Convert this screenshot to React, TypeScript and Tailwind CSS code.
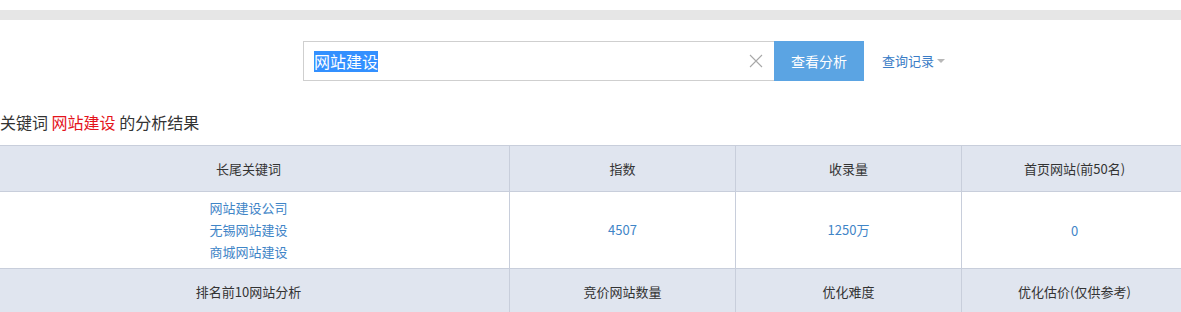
import React from 'react';

const font = { fontFamily: '"Microsoft YaHei", "Noto Sans CJK SC", "Liberation Sans", sans-serif' };

const keywords = ['网站建设公司', '无锡网站建设', '商城网站建设'];

export default function App() {
  return (
    <div className="w-[1181px] h-[312px] overflow-hidden bg-white text-[#333]" style={font}>
      <div className="h-[10px]" />
      <div className="h-[10px] bg-[#e6e6e6]" />

      {/* search bar */}
      <div className="flex items-center pt-[21px] pl-[303px]">
        <div className="flex items-center w-[471px] h-[40px] border border-[#cfcfcf] border-r-0 pl-[10px] pr-[11px]">
          <span className="text-[16px] leading-[21px] bg-[#3390ff] text-white">网站建设</span>
          <div className="flex-1" />
          <svg width="14" height="14" viewBox="0 0 14 14" className="text-[#a8a8a8]">
            <path d="M1 1L13 13M13 1L1 13" stroke="currentColor" strokeWidth="1.1" />
          </svg>
        </div>
        <button className="w-[90px] h-[40px] bg-[#5ba4e3] text-white text-[14px]">查看分析</button>
        <div className="flex items-center ml-[18px] text-[13px] text-[#3a7cc6]">
          查询记录
          <svg width="8" height="5" viewBox="0 0 8 5" className="ml-[3px] mt-[1px]">
            <path d="M0 0H8L4 4Z" fill="#b8b8b8" />
          </svg>
        </div>
      </div>

      {/* heading */}
      <div className="mt-[30px] mb-[10px] text-[16px] leading-[22px] h-[24px]">
        关键词 <span className="text-[#e4131b]">网站建设</span> 的分析结果
      </div>

      {/* table */}
      <div className="ml-[-12px] w-[1199px] grid grid-cols-[521px_226px_226px_226px] text-[13px] border-t border-[#c8cedb]">
        <div className="h-[46px] flex items-center justify-center bg-[#e0e5ef] border-b border-[#c8cedb]">长尾关键词</div>
        <div className="h-[46px] flex items-center justify-center bg-[#e0e5ef] border-b border-l border-[#c8cedb]">指数</div>
        <div className="h-[46px] flex items-center justify-center bg-[#e0e5ef] border-b border-l border-[#c8cedb]">收录量</div>
        <div className="h-[46px] flex items-center justify-center bg-[#e0e5ef] border-b border-l border-[#c8cedb]">首页网站(前50名)</div>

        <div className="h-[77px] flex flex-col items-center justify-center leading-[22px] text-[#3f85c7] border-b border-[#c8cedb]">
          {keywords.map((k) => (
            <span key={k}>{k}</span>
          ))}
        </div>
        <div className="h-[77px] flex items-center justify-center text-[#3f85c7] border-b border-l border-[#c8cedb]">4507</div>
        <div className="h-[77px] flex items-center justify-center text-[#3f85c7] border-b border-l border-[#c8cedb]">1250万</div>
        <div className="h-[77px] flex items-center justify-center text-[#3f85c7] border-b border-l border-[#c8cedb] pt-[2px]">0</div>

        <div className="h-[46px] flex items-center justify-center bg-[#e0e5ef] border-b border-[#c8cedb]">排名前10网站分析</div>
        <div className="h-[46px] flex items-center justify-center bg-[#e0e5ef] border-b border-l border-[#c8cedb]">竞价网站数量</div>
        <div className="h-[46px] flex items-center justify-center bg-[#e0e5ef] border-b border-l border-[#c8cedb]">优化难度</div>
        <div className="h-[46px] flex items-center justify-center bg-[#e0e5ef] border-b border-l border-[#c8cedb]">优化估价(仅供参考)</div>
      </div>
    </div>
  );
}
